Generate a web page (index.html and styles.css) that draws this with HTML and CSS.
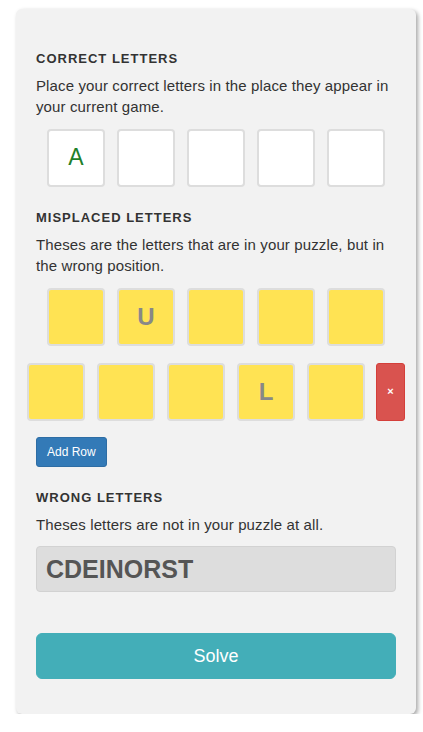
FILE: index.html
```html
<!DOCTYPE html>
<html lang="en">
<head>
<meta charset="utf-8">
<title>Wordle Solver</title>
<link rel="stylesheet" href="styles.css">
</head>
<body>
<div class="card">
  <h3 class="heading">Correct Letters</h3>
  <p class="desc">Place your correct letters in the place they appear in your current game.</p>
  <div class="row">
    <div class="tile tile-correct">A</div>
    <div class="tile"></div>
    <div class="tile"></div>
    <div class="tile"></div>
    <div class="tile"></div>
  </div>

  <h3 class="heading section">Misplaced Letters</h3>
  <p class="desc">Theses are the letters that are in your puzzle, but in the wrong position.</p>
  <div class="row row-gap">
    <div class="tile tile-yellow"></div>
    <div class="tile tile-yellow">U</div>
    <div class="tile tile-yellow"></div>
    <div class="tile tile-yellow"></div>
    <div class="tile tile-yellow"></div>
  </div>
  <div class="row">
    <div class="tile tile-yellow"></div>
    <div class="tile tile-yellow"></div>
    <div class="tile tile-yellow"></div>
    <div class="tile tile-yellow">L</div>
    <div class="tile tile-yellow"></div>
    <button class="btn-remove" type="button">&times;</button>
  </div>
  <button class="btn-add" type="button">Add Row</button>

  <h3 class="heading section">Wrong Letters</h3>
  <p class="desc">Theses letters are not in your puzzle at all.</p>
  <div class="wrong-input">CDEINORST</div>

  <button class="btn-solve" type="button">Solve</button>
</div>
</body>
</html>
```

FILE: styles.css
```css
* {
  box-sizing: border-box;
}

body {
  margin: 0;
  background: #ffffff;
  font-family: "Liberation Sans", Arial, sans-serif;
  color: #333333;
}

.card {
  width: 400px;
  margin: 9px 0 0 16px;
  padding: 41px 20px 35px;
  background: #f2f2f2;
  border-radius: 6px;
  box-shadow: 2px 2px 4px rgba(0, 0, 0, 0.35);
  display: flex;
  flex-direction: column;
  align-items: stretch;
}

.heading {
  margin: 0;
  font-size: 13px;
  line-height: 18px;
  font-weight: bold;
  letter-spacing: 1px;
  text-transform: uppercase;
  color: #333333;
}

.heading.section {
  margin-top: 22px;
}

.desc {
  margin: 7px 0 11px;
  font-size: 15px;
  line-height: 1.42857;
  letter-spacing: 0.12px;
}

.row {
  display: flex;
  justify-content: center;
  gap: 12px;
}

.row-gap {
  margin-bottom: 17px;
}

.tile {
  flex: none;
  width: 58px;
  height: 58px;
  border: 2px solid #dddddd;
  border-radius: 4px;
  background: #ffffff;
  display: flex;
  align-items: center;
  justify-content: center;
  font-size: 24px;
}

.tile-correct {
  color: #1f7f2a;
  font-size: 23px;
}

.tile-yellow {
  background: #ffe353;
  color: #888888;
  font-weight: bold;
}

.btn-remove {
  flex: none;
  width: 29px;
  height: 58px;
  margin-left: -1px;
  padding: 0;
  border: 1px solid #d43f3a;
  border-radius: 3px;
  background: #d9534f;
  color: #ffffff;
  font-family: "Liberation Sans", Arial, sans-serif;
  font-size: 11px;
  font-weight: bold;
  line-height: 1;
}

.btn-add {
  align-self: flex-start;
  margin-top: 16px;
  padding: 5px 10px;
  border: 1px solid #2e6da4;
  border-radius: 3px;
  background: #337ab7;
  color: #ffffff;
  font-family: "Liberation Sans", Arial, sans-serif;
  font-size: 12px;
  line-height: 18px;
}

.wrong-input {
  height: 46px;
  padding: 0 9px;
  border: 1px solid #d2d2d2;
  border-radius: 4px;
  background: #dddddd;
  color: #555555;
  font-size: 25px;
  font-weight: bold;
  line-height: 44px;
}

.btn-solve {
  margin-top: 41px;
  height: 46px;
  padding: 10px 16px;
  border: 1px solid #43aeb8;
  border-radius: 6px;
  background: #43aeb8;
  color: #ffffff;
  font-family: "Liberation Sans", Arial, sans-serif;
  font-size: 18px;
  line-height: 24px;
}
```
